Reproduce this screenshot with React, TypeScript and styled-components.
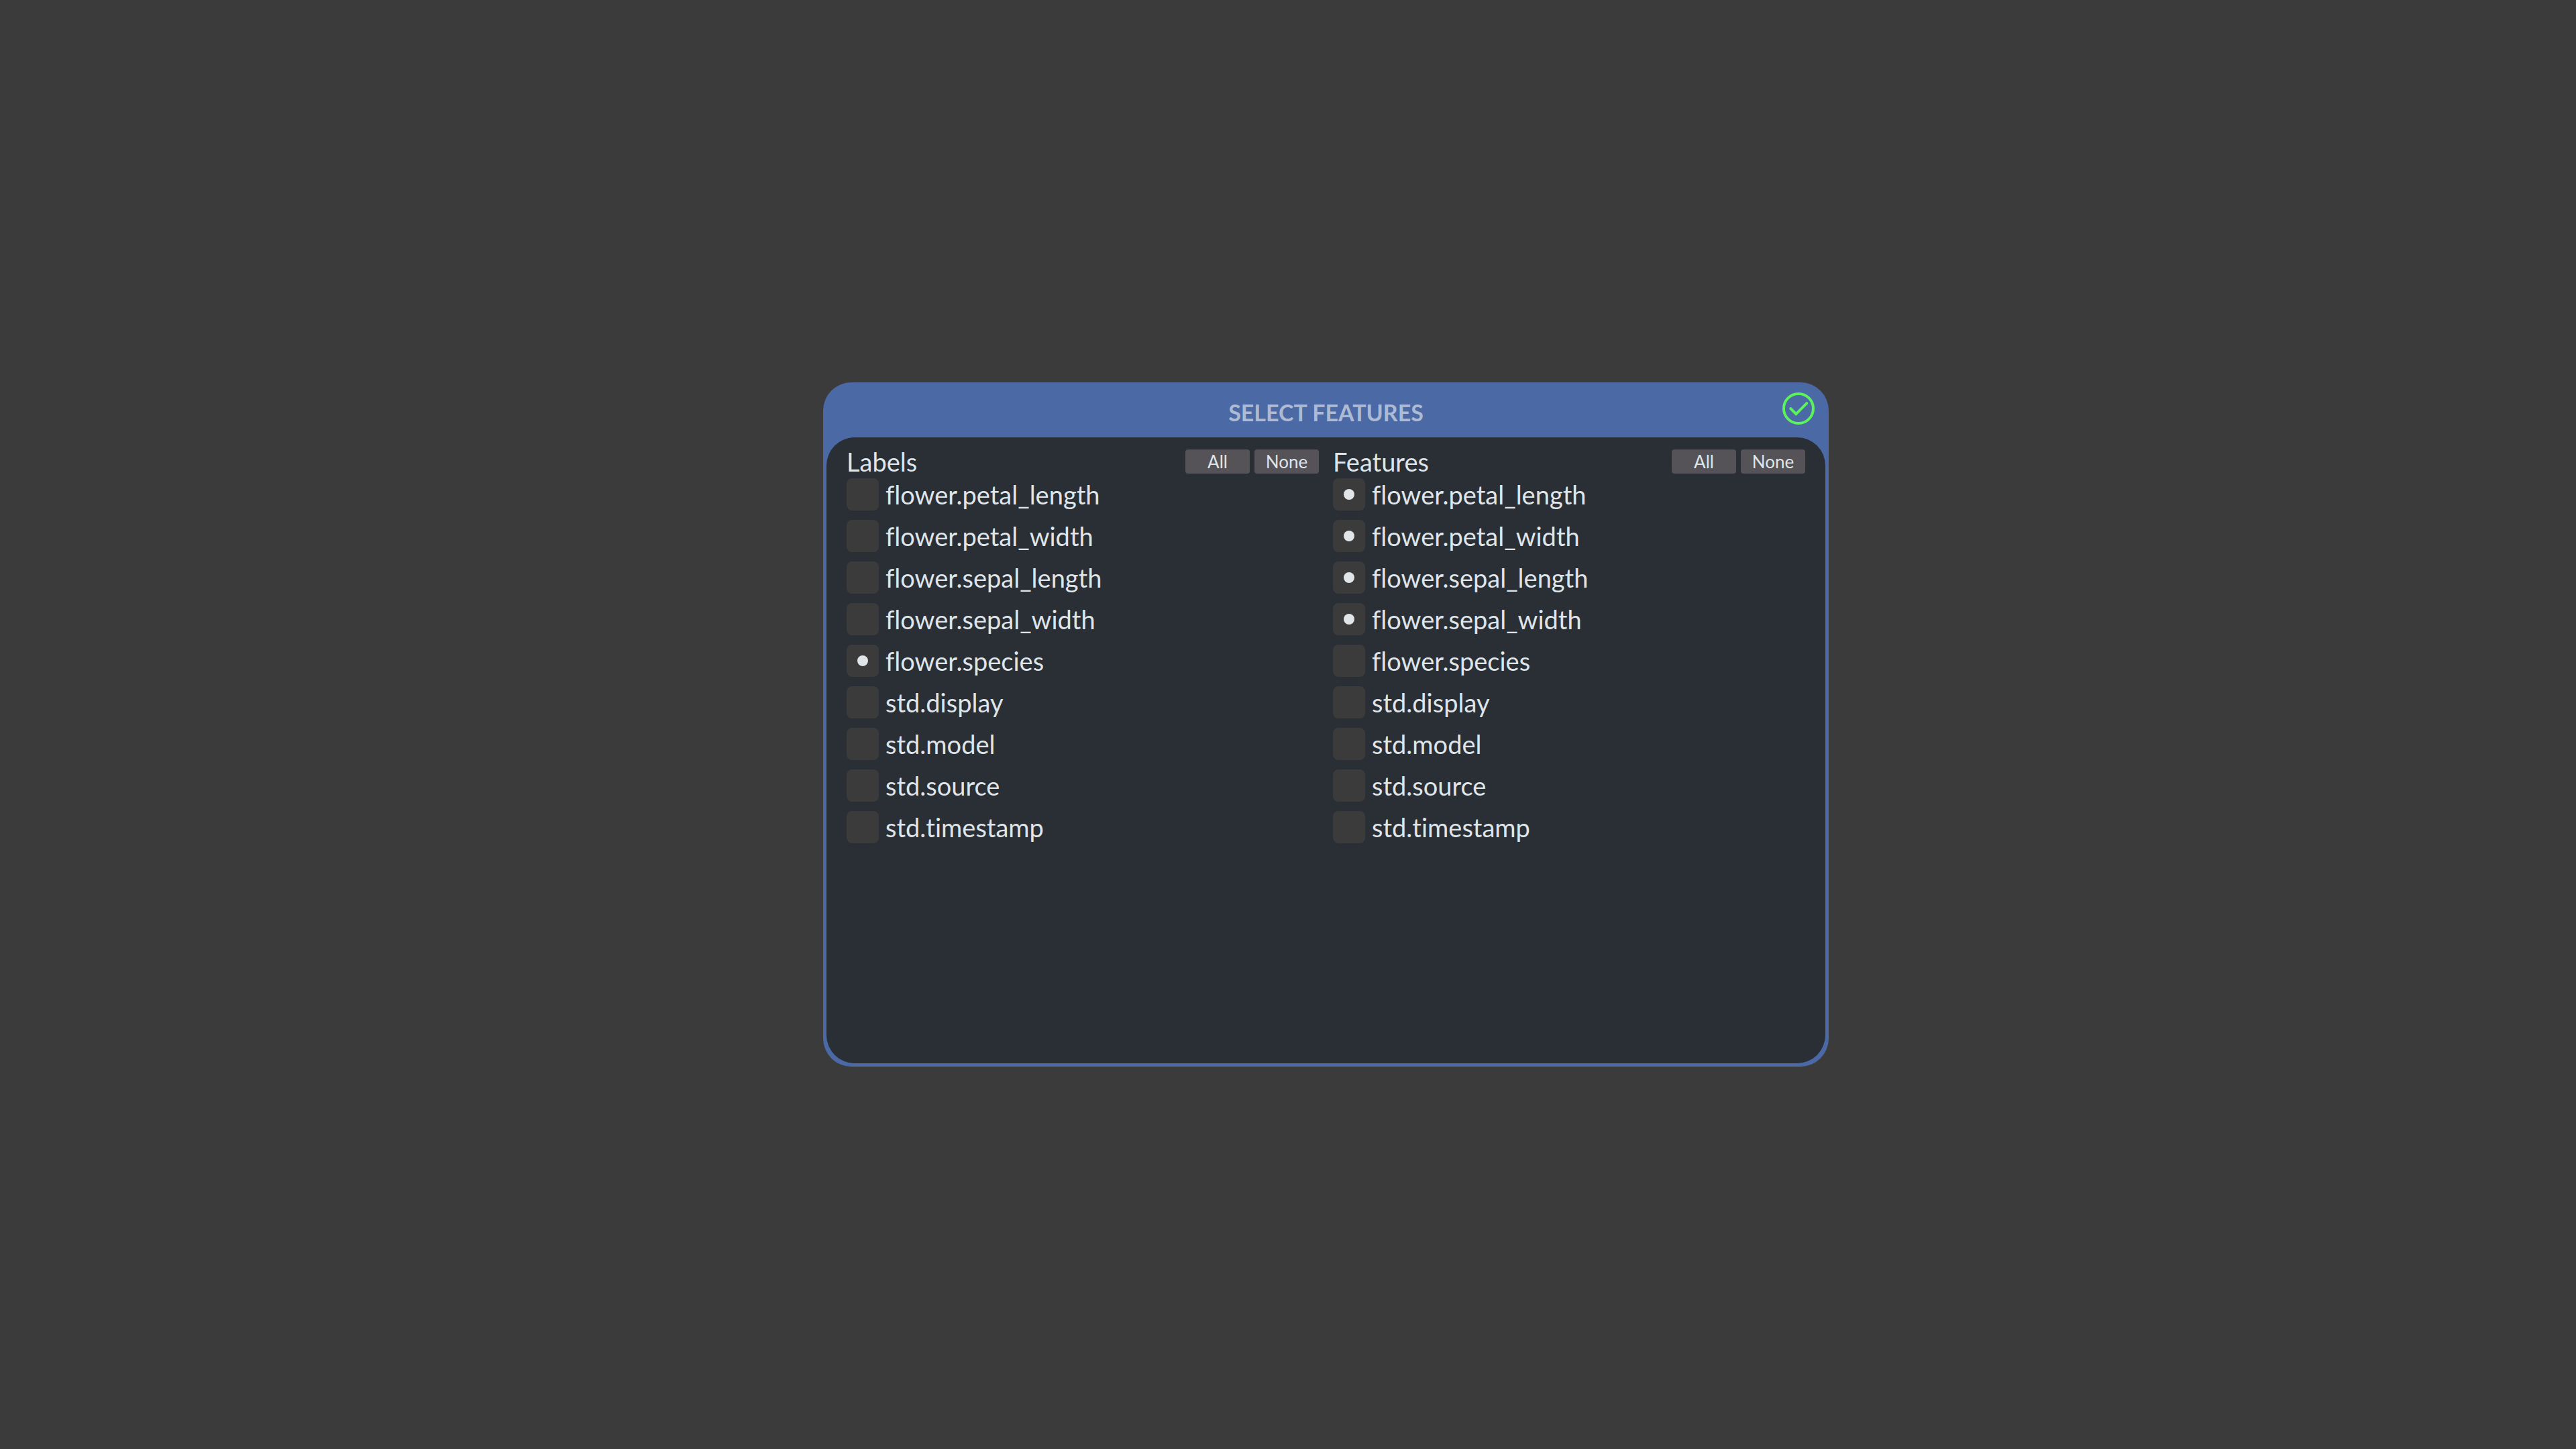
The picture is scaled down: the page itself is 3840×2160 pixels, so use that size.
import React, { useState } from "react";
import styled, { createGlobalStyle } from "styled-components";

const color = {
  backdrop: "#3b3b3c",
  accent: "#4b69a5",
  surface: "#2a2e35",
  box: "#3b3b3c",
  button: "#555358",
  text: "#dfe5e9",
  title: "#aebad4",
  confirm: "#5cf25c",
};

const GlobalStyle = createGlobalStyle`
  *, *::before, *::after { box-sizing: border-box; }
  body {
    margin: 0;
    background: ${color.backdrop};
    color: ${color.text};
    font-family: Lato, "Open Sans", sans-serif;
    font-variant-ligatures: none;
  }
`;

const Overlay = styled.main`
  min-height: 100vh;
  padding-left: 113px;
  display: flex;
  align-items: center;
  justify-content: center;
`;

const Dialog = styled.form`
  width: 1499px;
  max-width: 100%;
  min-height: 1020px;
  padding: 0 5px 5px;
  display: flex;
  flex-direction: column;
  border-radius: 42px;
  background: ${color.accent};
`;

const DialogHeader = styled.header`
  height: 82px;
  padding: 0 16px;
  display: grid;
  grid-template-columns: 48px 1fr 48px;
  align-items: center;
`;

const Title = styled.h1`
  grid-column: 2;
  margin: 0;
  padding-top: 8px;
  font-size: 34px;
  line-height: 40px;
  font-weight: 700;
  text-align: center;
  text-transform: uppercase;
  color: ${color.title};
`;

const ConfirmButton = styled.button`
  width: 48px;
  height: 48px;
  margin-bottom: 4px;
  padding: 0;
  border: 0;
  background: none;
  color: ${color.confirm};
  cursor: pointer;

  svg { display: block; }
`;

const DialogBody = styled.div`
  flex: 1;
  padding: 18px 30px;
  display: grid;
  grid-template-columns: 1fr 1fr;
  column-gap: 21px;
  align-items: start;
  border-radius: 42px;
  background: ${color.surface};
`;

const ColumnHeader = styled.div`
  height: 36px;
  display: flex;
  align-items: center;
  gap: 7px;
`;

const ColumnTitle = styled.h2`
  flex: 1;
  margin: 0;
  font-size: 38px;
  line-height: 36px;
  font-weight: 400;
`;

const BulkButton = styled.button`
  width: 96px;
  height: 36px;
  padding: 0;
  border: 0;
  border-radius: 4px;
  background: ${color.button};
  color: ${color.text};
  font-family: inherit;
  font-size: 26px;
  line-height: 36px;
  cursor: pointer;
`;

const OptionList = styled.ul`
  margin: 0;
  padding: 0;
  list-style: none;
`;

const Option = styled.label`
  height: 62px;
  display: flex;
  align-items: center;
  gap: 10px;
  font-size: 38px;
  line-height: 48px;
  cursor: pointer;
`;

const OptionBox = styled.input`
  appearance: none;
  flex: none;
  width: 48px;
  height: 48px;
  margin: 0;
  display: grid;
  place-items: center;
  border-radius: 8px;
  background: ${color.box};
  cursor: pointer;

  &:checked::before {
    content: "";
    width: 16px;
    height: 16px;
    border-radius: 50%;
    background: ${color.text};
  }
`;

const fields = [
  "flower.petal_length",
  "flower.petal_width",
  "flower.sepal_length",
  "flower.sepal_width",
  "flower.species",
  "std.display",
  "std.model",
  "std.source",
  "std.timestamp",
];

function FieldColumn({ title, initial }: { title: string; initial: string[] }) {
  const [selected, setSelected] = useState<string[]>(initial);
  const toggle = (name: string) =>
    setSelected((now) => (now.includes(name) ? now.filter((n) => n !== name) : [...now, name]));

  return (
    <section aria-label={title}>
      <ColumnHeader>
        <ColumnTitle>{title}</ColumnTitle>
        <BulkButton type="button" onClick={() => setSelected(fields)}>All</BulkButton>
        <BulkButton type="button" onClick={() => setSelected([])}>None</BulkButton>
      </ColumnHeader>
      <OptionList>
        {fields.map((name) => (
          <li key={name}>
            <Option>
              <OptionBox
                type="checkbox"
                checked={selected.includes(name)}
                onChange={() => toggle(name)}
              />
              {name}
            </Option>
          </li>
        ))}
      </OptionList>
    </section>
  );
}

export default function App() {
  return (
    <>
      <GlobalStyle />
      <Overlay>
        <Dialog onSubmit={(event) => event.preventDefault()}>
          <DialogHeader>
            <Title>Select Features</Title>
            <ConfirmButton type="submit" aria-label="Confirm">
              <svg width="48" height="48" viewBox="0 0 48 48" fill="none" stroke="currentColor" strokeWidth="4" strokeLinecap="round">
                <circle cx="24" cy="24" r="22" />
                <path d="M12.3 24 L20.3 32.2 L36.3 16.2" />
              </svg>
            </ConfirmButton>
          </DialogHeader>
          <DialogBody>
            <FieldColumn title="Labels" initial={["flower.species"]} />
            <FieldColumn title="Features" initial={fields.slice(0, 4)} />
          </DialogBody>
        </Dialog>
      </Overlay>
    </>
  );
}
